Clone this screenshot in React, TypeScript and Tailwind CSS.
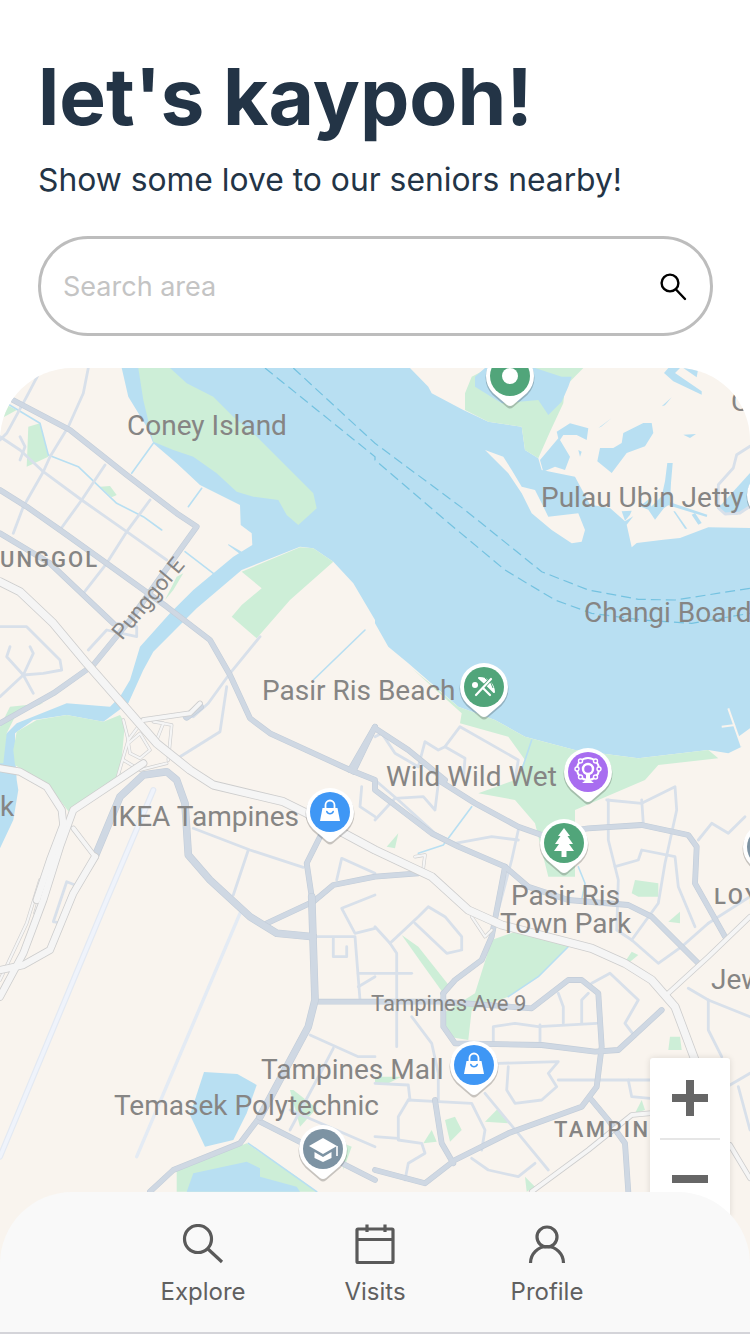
import React from "react";

type Z = [number, number];
const Z1: Z = [0, 360];
const Z2: Z = [375, 360];
const Z3: Z = [0, 780];
const Z4: Z = [375, 780];
const Z5: Z = [590, 368];
const Z6: Z = [0, 700];

const conv = (o: Z, s: string) =>
  s
    .trim()
    .split(/\s+/)
    .map((p) => {
      const [x, y] = p.split(",").map(Number);
      return `${(o[0] + x / 3).toFixed(1)},${(o[1] + y / 3).toFixed(1)}`;
    })
    .join(" ");

const seq = (...parts: [Z, string][]) => parts.map(([o, s]) => conv(o, s)).join(" ");

const WATER: string[] = [
  seq(
    [Z1, "365,24 385,110 440,200 460,250 530,310 600,375 660,405 720,435 722,495 755,520 757,555 700,590 580,690 510,760 420,860 390,960 360,1010 330,1040 200,1030 50,1090 10,1130 0,1180 0,1260"],
    [Z3, "0,205 40,120 55,30 50,0"],
    [Z1, "45,1180 45,1120 100,1080 200,1065 310,1085 385,1030 430,930 460,875 590,745 725,630 900,560 940,565 1000,605 1060,670 1125,780"],
    [Z2, "0,790 40,860 100,910 250,1040 360,1080 450,1130 600,1170 790,1195 1000,1170 1060,1180 1100,1160 1090,1130 1125,1105"],
    [Z5, "480,480 355,478 270,510 220,515 140,525 125,538 110,470 130,445 105,460 60,420 0,410"],
    [Z2, "600,350 500,330 490,295 450,270 440,200 340,185 265,150 170,100 160,80 105,24"]
  ),
  conv(Z5, "30,240 70,240 95,225 100,195 160,165 185,165 190,195 165,235 110,255 65,315 22,280"),
  conv(Z5, "25,180 65,150 35,175"),
  conv(Z5, "215,115 245,88 225,112"),
  conv(Z5, "280,200 318,198 300,210"),
  conv(Z5, "95,430 125,428 120,440 105,458"),
  conv(Z5, "150,415 178,392 195,455 175,425"),
  conv(Z5, "232,285 248,285 243,345 240,403 352,440 350,447 235,412 222,420 195,455 180,420 215,385 225,340"),
  conv(Z5, "385,420 480,315 480,420 440,440 405,438"),
  conv(Z5, "222,15 235,0 270,0 255,15 335,70 335,80 250,40"),
  conv(Z5, "280,0 320,28 325,0"),
  conv(Z5, "305,440 315,435 335,465 325,470"),
  conv(Z5, "250,430 255,430 292,482 285,482"),
  conv(Z2, "495,300 550,235 545,215 585,190 640,205 635,240 605,225 565,225 555,240 585,290 570,330 540,320 505,335"),
  conv(Z2, "610,270 620,275 615,290"),
  conv(Z3, "612,876 712,882 770,915 740,1000 700,1080 615,1100 570,1005"),
  conv(Z1, "685,552 725,575 720,582 685,556"),
];

const LAND: string[] = [
  conv(Z2, "330,270 385,290 410,330 440,380 480,390 500,430 520,470 610,460 630,510 620,545 590,550 530,510 470,460 440,400 400,340"),
];

const GREEN: string[] = [
  conv(Z1, "415,24 510,24 560,70 640,110 700,170 760,220 850,310 940,400 950,445 895,495 860,465 835,420 760,410 710,395 650,340 580,290 520,270 460,245 430,120"),
  conv(Z1, "725,635 900,562 940,565 1000,605 870,720 770,835 695,770 725,735 785,685"),
  conv(Z6, "40,150 50,95 110,60 200,45 310,65 360,45 375,70 360,230 210,340 140,250 60,205 45,195"),
  conv(Z6, "0,80 30,20 130,10 50,40 20,100 10,190 0,190"),
  conv(Z2, "290,50 270,100 270,150 340,185 440,200 450,270 490,295 525,215 565,130 570,80 625,24 340,24"),
  seq(
    [Z2, "110,925 250,1040 360,1080 450,1130 600,1170 790,1195 1000,1170 1030,1195 850,1215 810,1260"],
    [Z4, "600,90 600,290 520,290 480,130 420,60 310,40 420,0"],
    [Z2, "450,1200 400,1130 255,1090 260,1060"]
  ),
  conv(Z4, "300,640 350,480 420,455 590,490 490,590 400,650 290,690 280,780 220,770 205,700"),
  conv(Z4, "80,465 130,500 225,620 205,640 140,550"),
  conv(Z4, "770,340 780,300 850,310 850,350 790,350"),
  conv(Z4, "880,425 915,395 915,430"),
  conv(Z4, "880,810 885,770 915,770 920,810"),
  conv(Z4, "210,1020 240,1010 260,1050 225,1085"),
  conv(Z4, "145,1090 170,1050 185,1085"),
  conv(Z4, "330,1025 370,985 400,1030"),
  conv(Z4, "780,1000 800,960 810,990"),
  conv(Z4, "35,200 70,160 60,205"),
  conv(Z1, "85,200 120,190 145,290 80,320"),
  conv(Z1, "5,175 10,130 50,150"),
  conv(Z1, "300,380 330,378 350,405 335,412"),
  conv(Z1, "495,720 530,650 550,640 520,690"),
  conv(Z3, "870,930 880,930 950,985 900,1040"),
  conv(Z3, "530,1235 530,1170 740,1090 890,1190 950,1235"),
  conv(Z3, "1030,1090 1055,1100 1030,1170"),
  conv(Z4, "0,890 80,890 40,910 0,910"),
  conv(Z4, "750,545 770,515 790,525 760,550"),
  conv(Z4, "450,1190 480,1220 455,1235"),
];

const POND2 = [
  conv(Z2, "300,50 330,24 480,24 560,50 590,50 580,80 560,125 520,165 490,120 380,130 300,80"),
  conv(Z3, "560,1235 580,1180 740,1145 780,1165 780,1190 890,1220 900,1235"),
];

const HIGHWAY: string[] = [
  seq(
    [Z1, "0,665 60,695 160,790 260,910 370,1035"],
    [Z6, "470,130 570,210 640,255"],
    [Z3, "850,65 920,100 1125,210"],
    [Z4, "170,290 280,390 380,435 650,505 750,550 830,600 900,680 960,840"]
  ),
  seq([Z6, "430,190 220,330 180,440 130,600"], [Z3, "70,520 0,650"]),
  conv(Z6, "0,205 60,215 140,260 185,330 190,375 150,480 110,600"),
  seq([Z3, "285,230 220,340 150,510 70,555 0,570"]),
  conv(Z6, "220,385 285,470"),
  conv(Z6, "430,60 570,40 600,10"),
  conv(Z4, "880,640 1000,530 1125,410"),
  conv(Z4, "470,1235 640,1110 770,1005 825,1000"),
  conv(Z4, "1065,1095 1125,1195"),
];

const INTERCHANGE: string[] = [
  conv(Z6, "370,60 385,120 350,240"),
  conv(Z6, "385,130 420,100 450,150 420,175 390,160 385,130"),
  conv(Z6, "370,180 420,210 500,190"),
  conv(Z6, "490,70 515,75 505,180"),
  conv(Z6, "460,65 490,70 470,120 485,150"),
  conv(Z6, "430,60 385,120"),
  conv(Z3, "120,300 80,430 0,600"),
  conv(Z3, "170,180 150,240 105,400"),
  conv(Z4, "120,230 150,225 145,265"),
  conv(Z4, "290,410 330,470 350,450"),
];

const WIDE: string[] = [
  seq([Z6, "600,20 560,50"]),
  seq([Z6, "285,470 360,290 430,225 500,215 530,240 555,310 565,465 630,540"], [Z3, "750,410 830,460 940,470"]),
  conv(Z3, "935,350 945,660 925,740 780,1010"),
];

const ARTERIAL: string[] = [
  seq(
    [Z1, "0,390 80,440 180,510 320,610 500,740 630,840 690,945 750,1075 810,1120 1050,1230 1125,1100"],
    [Z2, "0,1105 100,1170 210,1260"],
    [Z4, "190,0 300,70 430,140 500,165"]
  ),
  conv(Z4, "500,165 640,145 800,135 940,165 965,200 960,310 1050,470"),
  seq([Z1, "1050,1230 1125,1260"], [Z4, "0,30 170,160 250,200 390,260 460,320 580,360 760,375 830,410 970,550"]),
  conv(Z1, "20,110 210,210 380,345 530,460 590,500 490,640 390,780 280,915 160,1000 0,1090"),
  conv(Z1, "0,520 150,610 340,790"),
  conv(Z3, "960,170 920,250 935,350"),
  conv(Z3, "780,1010 720,1090 520,1170 450,1235"),
  conv(Z3, "780,1025 1125,1200"),
  seq([Z3, "800,430 940,365 1000,315 1125,290"], [Z4, "0,290 130,280"]),
  seq([Z3, "945,665 1125,665"], [Z4, "0,665 200,665 470,685 580,600 620,600 670,640 680,800 665,920 620,980 400,1060 240,1140 150,1210 0,1170"]),
  conv(Z4, "205,640 240,600 320,540 350,470 390,260"),
  conv(Z4, "205,640 205,740 240,790 500,795 660,815 730,810 860,690"),
  conv(Z4, "180,960 200,1090 235,1150"),
  conv(Z4, "650,960 700,1020 750,1090 760,1235"),
  conv(Z1, "1125,1100 1060,1235"),
];

const MINOR: string[] = [
  conv(Z1, "0,230 60,270 130,335 245,420 380,515 500,600"),
  conv(Z1, "125,24 80,110 20,220 0,240"),
  conv(Z1, "265,24 250,100 205,200 150,290 130,335 70,440 40,520"),
  conv(Z1, "315,315 245,420 180,510"),
  conv(Z1, "450,420 380,515 320,610 250,700"),
  conv(Z1, "0,800 80,800 180,900 185,930 130,940 70,945 0,1010"),
  conv(Z1, "100,1000 70,945 100,880 90,860"),
  conv(Z1, "30,860 20,890 70,945"),
  conv(Z1, "60,230 75,260 60,300"),
  conv(Z1, "265,870 320,810 410,830 410,800 350,790"),
  conv(Z1, "780,830 690,940 625,1030 580,1070"),
  conv(Z1, "680,980 660,1115 540,1190"),
  conv(Z2, "0,1130 20,1120 60,1180 130,1220"),
  conv(Z2, "130,1220 150,1145 190,1170 210,1160 255,1100 430,1200 420,1260"),
  conv(Z2, "210,1160 270,1195 265,1260"),
  conv(Z5, "480,235 440,260 430,300 385,350 385,420 405,438 450,435 480,415"),
  conv(Z3, "580,145 750,210 910,262"),
  conv(Z3, "745,210 700,345"),
  conv(Z3, "1010,300 1025,235 1125,280"),
  conv(Z3, "1125,345 1025,385 1065,460 1125,445"),
  conv(Z3, "945,470 1065,470 1080,660"),
  conv(Z3, "1000,475 1000,530 1040,530 1040,500"),
  conv(Z3, "1075,580 1125,580"),
  conv(Z3, "1075,620 1125,590"),
  conv(Z3, "930,765 1075,830 1125,830"),
  conv(Z3, "1000,805 950,900 870,1050"),
  conv(Z3, "870,990 1125,1100"),
  conv(Z3, "1085,20 1080,80 1125,110"),
  conv(Z3, "160,425 200,305 225,315 185,430 160,425"),
  conv(Z4, "0,120 60,55 145,50 180,90 190,10"),
  conv(Z4, "0,0 70,60 180,160 240,190 350,170 430,180"),
  conv(Z4, "430,150 410,240 370,390 350,470"),
  conv(Z4, "0,440 45,490 65,520 65,800"),
  conv(Z4, "45,490 130,410 160,380 210,410 260,470 260,510 215,520 120,430"),
  conv(Z4, "0,580 110,580"),
  conv(Z4, "110,710 170,790 190,880 190,960"),
  conv(Z4, "370,850 550,845 520,880 545,920 500,960 420,970 395,930 400,860"),
  conv(Z4, "550,900 825,900"),
  conv(Z4, "760,900 770,950 825,955"),
  conv(Z4, "355,790 355,740 420,730 490,740 665,730"),
  conv(Z4, "495,790 495,735"),
  conv(Z4, "550,640 565,680 565,730"),
  conv(Z4, "620,730 620,660 640,640"),
  conv(Z4, "650,610 705,580 790,660 750,730 780,770"),
  conv(Z4, "695,60 800,70 900,20 905,90 870,250 850,370 770,480 850,550 920,500 1000,430"),
  conv(Z4, "700,60 700,180 730,300 725,450 770,480"),
  conv(Z4, "800,60 805,130"),
  conv(Z4, "720,260 790,240 800,210 900,230 910,320 960,440"),
  conv(Z4, "970,180 1010,130 1060,160 1110,110"),
  conv(Z4, "1000,430 1125,350"),
  conv(Z4, "940,625 1000,660 1125,710"),
  conv(Z4, "1000,660 1000,750 1040,830"),
  conv(Z4, "1065,915 1125,880"),
  conv(Z4, "1090,920 1125,1050"),
  conv(Z4, "100,960 190,965 290,970 330,1050 320,1110"),
  conv(Z4, "100,960 70,1010 70,1080 140,1090 150,1120 100,1150 90,1200"),
  conv(Z4, "0,910 100,915 105,960"),
  conv(Z4, "0,1070 70,1075"),
  conv(Z4, "290,1135 340,1170 430,1190 480,1150"),
  conv(Z4, "330,940 520,1170"),
];

const STREAM: string[] = [
  conv(Z1, "20,130 120,190 145,285 235,320 350,430 430,470 485,510"),
  conv(Z1, "460,250 395,340"),
  conv(Z1, "605,385 565,440"),
  conv(Z1, "555,575 640,640"),
  conv(Z1, "1095,810 940,960"),
  conv(Z4, "290,80 205,195 130,220"),
  conv(Z4, "610,260 630,310 620,360"),
  conv(Z4, "590,490 490,590 400,650"),
  conv(Z2, "470,1140 440,1230"),
  conv(Z3, "745,1090 950,1235"),
];

const FERRY: string[] = [
  seq([Z1, "795,24 1125,290"], [Z2, "0,300 210,480 390,630 540,720 650,760 800,780 950,790 1125,760"]),
  seq([Z1, "880,24 1125,250"], [Z2, "0,250 270,450 500,635 640,690 790,718 900,720 1125,685"]),
];

const LABELS: { t: string; x: number; y: number }[] = [
  { t: "Coney Island", x: 127, y: 435 },
  { t: "Pulau Ubin Jetty", x: 541, y: 507 },
  { t: "Changi Board", x: 584, y: 622 },
  { t: "Pasir Ris Beach", x: 262, y: 700 },
  { t: "Wild Wild Wet", x: 386, y: 786 },
  { t: "IKEA Tampines", x: 111, y: 826 },
  { t: "Pasir Ris", x: 511, y: 905 },
  { t: "Town Park", x: 500, y: 933 },
  { t: "Tampines Mall", x: 261, y: 1079 },
  { t: "Temasek Polytechnic", x: 114, y: 1115 },
  { t: "Jew", x: 711, y: 989 },
  { t: "k", x: 0, y: 816 },
  { t: "C", x: 731, y: 411 },
];

const Road = ({ pts, w, c }: { pts: string; w: number; c: string }) => (
  <polyline points={pts} fill="none" stroke={c} strokeWidth={w} strokeLinejoin="round" strokeLinecap="round" />
);

const Pin = ({ x, y, color, children }: { x: number; y: number; color: string; children?: React.ReactNode }) => (
  <g transform={`translate(${x} ${y})`}>
    <path d="M-17 17.5A24 24 0 1 1 17 17.5L3 29.5Q0 32 -3 29.5Z" fill="#000" opacity="0.2" transform="translate(0 1.2) scale(1.02)" />
    <path d="M-17 17A24 24 0 1 1 17 17L3 29Q0 31 -3 29Z" fill="#fff" />
    <circle r="20" fill={color} />
    {children}
  </g>
);

const Bag = () => (
  <g>
    <path d="M-7.5 -4H7.5L10 9H-10Z" fill="#fff" />
    <path d="M-4.5 -4V-7A4.5 4.5 0 0 1 4.5 -7V-4" fill="none" stroke="#fff" strokeWidth="1.8" />
    <path d="M-3.2 -0.5A3.4 3.4 0 0 0 3.2 -0.5" fill="none" stroke="#3f97f5" strokeWidth="1.6" strokeLinecap="round" />
  </g>
);

const MapDrawing = () => (
  <svg viewBox="0 368 750 966" className="block w-full h-full">
    <rect x="0" y="368" width="750" height="966" fill="#f9f4ee" />
    {WATER.map((p, i) => (
      <polygon key={i} points={p} fill="#b8dff2" />
    ))}
    {LAND.map((p, i) => (
      <polygon key={i} points={p} fill="#f9f4ee" />
    ))}
    {GREEN.map((p, i) => (
      <polygon key={i} points={p} fill="#cdeed7" />
    ))}
    {POND2.map((p, i) => (
      <polygon key={i} points={p} fill="#b8dff2" />
    ))}
    {STREAM.map((p, i) => (
      <Road key={i} pts={p} w={1.6} c="#b8dff2" />
    ))}
    <polyline points={conv(Z2, "1060,1045 1100,1160")} stroke="#f9f4ee" strokeWidth="2" fill="none" />
    <polyline points={conv(Z2, "1040,1100 1080,1095")} stroke="#f9f4ee" strokeWidth="2" fill="none" />
    {FERRY.map((p, i) => (
      <polyline key={i} points={p} fill="none" stroke="#74c2e0" strokeWidth="1.2" strokeDasharray="10 5" />
    ))}
    <Road pts={conv(Z6, "460,270 320,600") + " " + conv(Z3, "0,1130")} w={6} c="#e3e9f2" />
    <Road pts={conv(Z6, "460,270 320,600") + " " + conv(Z3, "0,1130")} w={3.6} c="#eff3fb" />
    <Road pts={conv(Z3, "720,400 410,1130")} w={3.4} c="#e4ebf4" />
    {MINOR.map((p, i) => (
      <Road key={i} pts={p} w={2.8} c="#d8e0ea" />
    ))}
    {ARTERIAL.map((p, i) => (
      <Road key={i} pts={p} w={5.8} c="#c3cdd9" />
    ))}
    {ARTERIAL.map((p, i) => (
      <Road key={i} pts={p} w={4.6} c="#cfd8e3" />
    ))}
    {WIDE.map((p, i) => (
      <Road key={i} pts={p} w={7.6} c="#c3cdd9" />
    ))}
    {WIDE.map((p, i) => (
      <Road key={i} pts={p} w={6.4} c="#cfd8e3" />
    ))}
    {INTERCHANGE.map((p, i) => (
      <Road key={i} pts={p} w={3.4} c="#cfcfcf" />
    ))}
    {INTERCHANGE.map((p, i) => (
      <Road key={i} pts={p} w={2.2} c="#f5f5f5" />
    ))}
    {HIGHWAY.map((p, i) => (
      <Road key={i} pts={p} w={i === 0 ? 9 : i < 4 ? 8 : 5.5} c="#cdcdcd" />
    ))}
    {HIGHWAY.map((p, i) => (
      <Road key={i} pts={p} w={i === 0 ? 7.4 : i < 4 ? 6.4 : 4} c="#f5f5f5" />
    ))}

    {LABELS.map((l) => (
      <text key={l.t} x={l.x} y={l.y} className="fill-[#868584] text-[28px] font-['Roboto',sans-serif]">
        {l.t}
      </text>
    ))}
    <text x={371} y={1011} className="fill-[#868584] text-[22px] font-['Roboto',sans-serif]">
      Tampines Ave 9
    </text>
    <text x={0} y={567} className="fill-[#868584] text-[22px] font-medium tracking-[2px] font-['Roboto',sans-serif]">
      UNGGOL
    </text>
    <text x={714} y={904} className="fill-[#868584] text-[22px] font-medium tracking-[2.6px] font-['Roboto',sans-serif]">
      LOY
    </text>
    <text x={554} y={1137} className="fill-[#868584] text-[22px] font-medium tracking-[2.4px] font-['Roboto',sans-serif]">
      TAMPIN
    </text>
    <text transform="translate(122 641) rotate(-50)" className="fill-[#868584] text-[22px] font-['Roboto',sans-serif]">
      Punggol E
    </text>

    <Pin x={510} y={376} color="#51a57a">
      <circle r="8" fill="#fff" />
    </Pin>
    <Pin x={484} y={687} color="#51a57a">
      <path d="M-5 -9A14.5 14.5 0 0 1 10 5L3 -2Z" fill="#fff" stroke="#fff" strokeWidth="2" strokeLinejoin="round" />
      <path d="M1 -9L7 -4L9 1" fill="none" stroke="#51a57a" strokeWidth="1" />
      <path d="M-8 8L6 -7" stroke="#51a57a" strokeWidth="4" />
      <path d="M-8 8L7 -8" stroke="#fff" strokeWidth="2.2" strokeLinecap="round" />
      <path d="M-1 1L6 8" stroke="#fff" strokeWidth="2.2" strokeLinecap="round" />
      <circle cx="-9" cy="-2" r="3" fill="#fff" />
    </Pin>
    <Pin x={588} y={772} color="#a86df0">
      <circle r="11" cy="-3" fill="none" stroke="#fff" strokeWidth="2" />
      <circle r="5" cy="-3" fill="none" stroke="#fff" strokeWidth="2.4" />
      <path d="M-2 2L-2 8L-6 11H6L2 8L2 2Z" fill="#fff" />
      <g fill="#a86df0" stroke="#fff" strokeWidth="1.4">
        <circle cx="-7.5" cy="-11" r="2" />
        <circle cx="7.5" cy="-11" r="2" />
        <circle cx="-11" cy="-3" r="2" />
        <circle cx="11" cy="-3" r="2" />
        <circle cx="-7.5" cy="5" r="2" />
        <circle cx="7.5" cy="5" r="2" />
      </g>
    </Pin>
    <Pin x={564} y={843} color="#51a57a">
      <path d="M0 -15L6 -7H3.5L9 1H5L10 8H2.5V14H-2.5V8H-10L-5 1H-9L-3.5 -7H-6Z" fill="#fff" />
    </Pin>
    <Pin x={330} y={812} color="#3f97f5">
      <Bag />
    </Pin>
    <Pin x={474} y={1065} color="#3f97f5">
      <Bag />
    </Pin>
    <Pin x={323} y={1149} color="#7d93a3">
      <path d="M0 -11L14 -3L0 5L-14 -3Z" fill="#fff" />
      <path d="M-8.5 3L0 8L8.5 3V9L0 13L-8.5 9Z" fill="#fff" />
      <path d="M14 -3V7" stroke="#fff" strokeWidth="1.6" />
    </Pin>
    <Pin x={767} y={847} color="#7d93a3" />
    <Pin x={771} y={495} color="#51a57a" />
  </svg>
);

const ZoomControl = () => (
  <div className="absolute left-[650px] top-[690px] w-20 h-40 bg-white rounded-[3px] shadow-[0_0_6px_rgba(0,0,0,0.12)] flex flex-col items-center">
    <div className="h-20 flex items-center justify-center w-full">
      <div className="relative w-9 h-9">
        <div className="absolute left-0 top-[14px] w-9 h-2 bg-[#666666]" />
        <div className="absolute left-[14px] top-0 w-2 h-9 bg-[#666666]" />
      </div>
    </div>
    <div className="w-[60px] h-[2px] bg-[#e6e6e6]" />
    <div className="flex-1 flex items-center justify-center w-full">
      <div className="w-9 h-2 bg-[#666666]" />
    </div>
  </div>
);

const NavItem = ({ label, icon }: { label: string; icon: React.ReactNode }) => (
  <div className="w-[172px] flex flex-col items-center">
    <svg viewBox="0 0 44 44" className="w-11 h-11" fill="none" stroke="#5a5a5a">
      {icon}
    </svg>
    <span className="mt-[4px] text-[24px] leading-[40px] text-[#606060] font-['Inter',sans-serif]">{label}</span>
  </div>
);

export default function App() {
  return (
    <div className="relative w-[750px] h-[1334px] overflow-hidden bg-white font-['Inter',sans-serif] flex flex-col">
      <header className="px-[38px] pt-[48px] shrink-0">
        <h1 className="text-[78.4px] leading-[97px] font-bold text-[#233446] whitespace-nowrap">let's kaypoh!</h1>
        <p className="mt-[15px] text-[31.8px] leading-[39px] text-[#233446] whitespace-nowrap">Show some love to our seniors nearby!</p>
        <div className="mt-[37px] h-[100px] w-[675px] rounded-full border-[3px] border-[#bdbdbd] flex items-center justify-between pt-[2px] pl-[22px] pr-[21px]">
          <span className="text-[27px] text-[#c4c4c4]">Search area</span>
          <svg viewBox="0 0 32 32" className="w-8 h-8" fill="none" stroke="#000" strokeWidth="2.4">
            <circle cx="13" cy="12" r="8.4" />
            <path d="M19 18.5L28 28" strokeLinecap="round" />
          </svg>
        </div>
      </header>
      <main className="relative mt-[32px] h-[966px] shrink-0 rounded-t-[72px] overflow-hidden">
        <MapDrawing />
        <ZoomControl />
      </main>
      <nav className="absolute left-0 right-0 bottom-0 h-[142px] bg-[#f9f9f9] rounded-t-[72px] border-b-2 border-[#d4d4d9] flex justify-center pt-[32px]">
        <NavItem
          label="Explore"
          icon={
            <g strokeWidth="3.2">
              <circle cx="17" cy="15" r="13.5" />
              <path d="M27 25L41 38" />
            </g>
          }
        />
        <NavItem
          label="Visits"
          icon={
            <g strokeWidth="3.2">
              <rect x="4" y="5" width="36" height="33.5" rx="1" />
              <path d="M4 15.5H40M14 0.5V8M32 0.5V8" />
            </g>
          }
        />
        <NavItem
          label="Profile"
          icon={
            <g strokeWidth="3.2">
              <circle cx="22" cy="13" r="10" />
              <path d="M5.5 39A16.5 16.5 0 0 1 38.5 39" />
            </g>
          }
        />
      </nav>
    </div>
  );
}
